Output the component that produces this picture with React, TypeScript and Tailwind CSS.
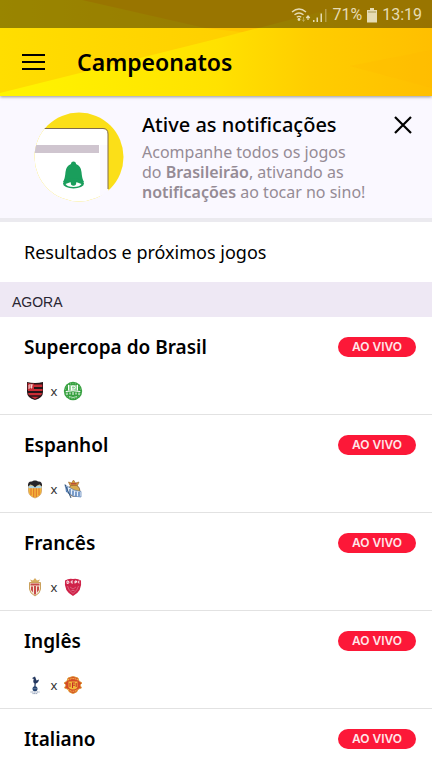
import React from 'react';

type Team = { name: string; Crest: () => React.ReactElement };
type League = { name: string; home?: Team; away?: Team };

function Flamengo() {
  return (
    <svg viewBox="0 0 20 20" className="h-5 w-5" aria-hidden="true">
      <path d="M2 1Q10 3 18 1V11Q18 17 10 19Q2 17 2 11Z" fill="#241518" />
      <path d="M9 3.500h8.300v2.600H9zM9 8h8.500v2H3V8zM3 12h14l-.8 2.200H3.800zM6 15.800h8l-4 2.200z" fill="#c92d35" />
      <path d="M2.700 2Q6 3 9 2.500V9H2.700Z" fill="#c92d35" />
      <path d="M4 4v4M4 4h2.500M4 6h3.500M6.500 3.500v4M6.500 4h1.500" stroke="#f4dada" strokeWidth="0.900" fill="none" />
    </svg>
  );
}

function Palmeiras() {
  return (
    <svg viewBox="0 0 20 20" className="h-5 w-5" aria-hidden="true">
      <circle cx="10" cy="10" r="9.200" fill="#36a03f" />
      <circle cx="10" cy="10" r="7.600" fill="none" stroke="#a9dcae" strokeWidth="0.700" strokeDasharray="1 1.500" />
      <path d="M5.500 4h9V9.500H5.500z" fill="#8fcf95" />
      <path d="M8.500 9.500V5h2q2 0 2 1.500t-2 1.500h-2M5.500 4v5.500M14.500 4v5.500" fill="none" stroke="#fff" strokeWidth="1" />
      <path d="M3 10.500q7-1.500 14 0M4 14v-2.500M7 13.500v-2M10 14v-3M13 13.500v-2M16 14v-2.500" stroke="#fff" strokeWidth="1" fill="none" />
      <path d="M6 15.500q4 2 8 0" stroke="#c4e8c7" strokeWidth="0.900" fill="none" />
    </svg>
  );
}

function Valencia() {
  return (
    <svg viewBox="0 0 20 20" className="h-5 w-5" aria-hidden="true">
      <path d="M3.500 6h13V12q0 5-6.500 7q-6.500-2-6.500-7z" fill="#f5b83b" stroke="#c28a4d" strokeWidth="0.600" />
      <path d="M6 9v7M8.700 9v9M11.300 9v9M14 9v7" stroke="#e0722d" strokeWidth="1.100" />
      <path d="M3.500 6.500h13v2.700h-13z" fill="#aed3e2" />
      <path d="M3 7.500Q2.500 2 7 2.500Q8.500 1 10 1.500Q11.500 1 13 2.500Q17.500 2 17 7.500L14.500 5.500L12 6.500L10 8.500L8 6.500L5.500 5.500Z" fill="#252329" />
    </svg>
  );
}

function RealSociedad() {
  return (
    <svg viewBox="0 0 20 20" className="h-5 w-5" aria-hidden="true">
      <circle cx="11" cy="11.500" r="5.800" fill="#d8ac4e" stroke="#795530" strokeWidth="0.800" />
      <path d="M7 6.500L5.500 3L8.500 4L10.500 1L12.500 4L16 3L14.500 6.500Z" fill="#d49b35" stroke="#9c632d" strokeWidth="0.600" />
      <path d="M8 4.800h5.500" stroke="#b43e36" strokeWidth="1.200" />
      <path d="M2 6L11 11L18 12.500V18L10 17L3.500 13Z" fill="#e8f0fb" stroke="#3867a6" strokeWidth="0.600" />
      <path d="M4 8v5M7 10v5M10 11.500v5M13 12.500v5M16 13v4.500" stroke="#3f70b0" strokeWidth="1.300" />
      <path d="M2 5.500L8 19" stroke="#345579" strokeWidth="1" />
    </svg>
  );
}

function Monaco() {
  return (
    <svg viewBox="0 0 20 20" className="h-5 w-5" aria-hidden="true">
      <path d="M6.500 5L5 2.500L8 3.500L10 1L12 3.500L15 2.500L13.500 5Z" fill="#d6a95e" />
      <path d="M4.500 5.500h11V12q0 4-5.500 7q-5.500-3-5.500-7z" fill="#f5e8d7" stroke="#caa15c" strokeWidth="1" />
      <path d="M5.500 6.500h9v2h-9zM6 9.500h2v6L6 13zM9 9h2v8.500H9zM12 9.500h2V13l-2 2.500z" fill="#c74949" />
    </svg>
  );
}

function Dijon() {
  return (
    <svg viewBox="0 0 20 20" className="h-5 w-5" aria-hidden="true">
      <path d="M2 3.500Q6 1 10 2Q14 1 18 3.500Q19.500 14 10 19Q0.500 14 2 3.500Z" fill="#cf2349" />
      <path d="M4 4v2.500q2.500 0 2-1.500T4 4M10 4q-2-.5-2 1t2 1M12 6.500V4h1.500v1.300H12M16.500 4q-1.500 0-1.500 1t1.500 1" fill="none" stroke="#fff" strokeWidth="0.900" />
      <path d="M4.500 9Q5 13 10 16.500Q15 13 15.500 9" fill="none" stroke="#dc6681" strokeWidth="0.900" />
      <path d="M7 10l3 2l3-2M8.500 13.500h3" fill="none" stroke="#dc6681" strokeWidth="0.900" />
    </svg>
  );
}

function Tottenham() {
  return (
    <svg viewBox="0 0 20 20" className="h-5 w-5" aria-hidden="true">
      <path d="M8 2.500L10 1.500L11 4L11.500 5.500L14 4.500Q13.500 8 10.800 8.500L10.500 12H9.300L9.500 8.500Q7.500 7.500 8.800 4L7 3.200Z" fill="#24385f" />
      <circle cx="10" cy="13.800" r="2.500" fill="#24436f" />
      <path d="M8.300 13.300q1.700 1 3.500 0" fill="none" stroke="#9babc2" strokeWidth="0.500" />
      <path d="M5.500 17h9M7.500 18.600h5" stroke="#7f8fab" strokeWidth="0.900" strokeDasharray="1.200 0.400" />
    </svg>
  );
}

function Manchester() {
  return (
    <svg viewBox="0 0 20 20" className="h-5 w-5" aria-hidden="true">
      <path d="M5 3Q10 0 15 3L16 6L19 8L17 10L18.500 13L15.500 14Q14 18 10 18.500Q6 18 4.500 14L1.500 13L3 10L1 8L4 6Z" fill="#d54a28" stroke="#dd992d" strokeWidth="0.800" />
      <path d="M5 5Q10 2 15 5M5 14.500Q10 18 15 14.500" fill="none" stroke="#f4bc48" strokeWidth="1.200" strokeDasharray="1.200 0.600" />
      <path d="M5.500 6.500h9v5q0 2.500-4.500 3q-4.500-.5-4.500-3z" fill="#f2b93a" />
      <path d="M7 8v4M9.500 7.500v5.500M9.500 8h2.500M9.500 10.200h2.500M13.200 8v4" stroke="#c52e25" strokeWidth="1" />
    </svg>
  );
}

const leagues: League[] = [
  { name: 'Supercopa do Brasil', home: { name: 'Flamengo', Crest: Flamengo }, away: { name: 'Palmeiras', Crest: Palmeiras } },
  { name: 'Espanhol', home: { name: 'Valencia', Crest: Valencia }, away: { name: 'Real Sociedad', Crest: RealSociedad } },
  { name: 'Francês', home: { name: 'Monaco', Crest: Monaco }, away: { name: 'Dijon', Crest: Dijon } },
  { name: 'Inglês', home: { name: 'Tottenham', Crest: Tottenham }, away: { name: 'Manchester United', Crest: Manchester } },
  { name: 'Italiano' },
];

function HeaderBackdrop() {
  return (
    <svg className="absolute inset-0 h-full w-full" viewBox="0 0 432 96" preserveAspectRatio="none" aria-hidden="true">
      <defs>
        <linearGradient id="base" x1="0" x2="1" y1="0" y2="0">
          <stop offset="0" stopColor="#ffde00" />
          <stop offset="0.500" stopColor="#ffd000" />
          <stop offset="1" stopColor="#ffc400" />
        </linearGradient>
        <linearGradient id="beam" x1="0" x2="1" y1="0" y2="0">
          <stop offset="0" stopColor="#fff500" />
          <stop offset="0.500" stopColor="#ffe200" />
          <stop offset="0.720" stopColor="#ffcd00" />
          <stop offset="1" stopColor="#ffbf00" />
        </linearGradient>
      </defs>
      <rect width="432" height="96" fill="url(#base)" />
      <path d="M82 0H432V14L250 33L205 28Z" fill="#ffc400" />
      <path d="M0 93L216 39L320 12L432 20V96H0Z" fill="url(#beam)" />
      <path d="M432 50L350 66L432 88Z" fill="#ffb700" opacity="0.250" />
    </svg>
  );
}

function StatusBar() {
  return (
    <div className="relative flex h-7 items-center justify-end gap-1 bg-black/40 pr-2.5 pt-0.5 font-[Roboto,sans-serif] text-base text-[#e6dcb4]">
      <svg viewBox="0 0 37 16" className="h-4 w-[37px]" role="img" aria-label="Wi-Fi e sinal">
        <path d="M1 5Q8-1 15 5M3.500 7.800Q8 4 12.500 7.800M5.800 10.300Q8 8.500 10.200 10.300" fill="none" stroke="currentColor" strokeWidth="1.400" />
        <circle cx="8" cy="12.500" r="1.400" fill="currentColor" />
        <path d="M12.500 10v4M11 12.500l1.500 2l1.500-2" fill="none" stroke="currentColor" opacity="0.400" />
        <path d="M17 13V9.500M15.200 11L17 9L18.800 11" fill="none" stroke="currentColor" strokeWidth="1.200" />
        <path d="M22 13h1.500V15H22zM25.500 10.500H27V15h-1.500zM29.500 6.500H31V15h-1.500z" fill="currentColor" />
        <path d="M34 2h1.500v13H34z" fill="currentColor" opacity="0.400" />
      </svg>
      <span className="leading-5">71%</span>
      <svg viewBox="0 0 12 16" className="h-4 w-3" role="img" aria-label="Bateria">
        <path d="M4 1h4v2h3V15.500H1V3H4z" fill="currentColor" />
        <path d="M2 5h8" stroke="#a69a58" />
      </svg>
      <span className="leading-5">13:19</span>
    </div>
  );
}

function NotificationArt() {
  return (
    <svg viewBox="0 0 90 90" className="h-[90px] w-[90px] shrink-0" aria-hidden="true">
      <defs>
        <clipPath id="disc"><circle cx="45" cy="45" r="44.500" /></clipPath>
      </defs>
      <g clipPath="url(#disc)">
        <rect width="90" height="90" fill="#fbdf18" />
        <path d="M0 17H69Q74 17 74 22V90H0Z" fill="#fff" />
        <path d="M66 33H74V90H66Z" fill="#fbf9ff" />
        <path d="M0 16.500H69Q74 16.500 74 22V77" fill="none" stroke="#806b4c" />
        <path d="M0 33H65V41H0Z" fill="#cfc5cf" />
      </g>
      <path d="M74.500 77V90H60Z" fill="#faf8ff" />
      <path d="M39.500 49.500a2.500 2.500 0 0 1 2.500 2.500Q47 54 47.500 60Q48 67 50 70H29Q31 67 31.500 60Q32 54 37 52a2.500 2.500 0 0 1 2.500-2.500Z" fill="#1a9e5c" />
      <ellipse cx="39.500" cy="71.500" rx="10.500" ry="5" fill="#1a9e5c" />
      <path d="M31.500 72Q39.500 68 47.500 72Q46 75 39.500 75T31.500 72Z" fill="#fff" />
      <circle cx="39.500" cy="71" r="2.700" fill="#1a9e5c" />
    </svg>
  );
}

function LeagueRow({ league }: { league: League }) {
  const { name, home, away } = league;
  return (
    <li className="h-[98px] shrink-0 border-b border-[#e2e2e2] pl-6 pr-4 pt-4">
      <div className="flex items-center justify-between">
        <h2 className="text-[19px] font-semibold leading-7">{name}</h2>
        <span className="flex h-5 w-[78px] items-center justify-center rounded-full bg-[#fc1838] font-[Inter,sans-serif] text-xs font-semibold leading-4 text-[#ffe6e9]">
          AO VIVO
        </span>
      </div>
      {home && away && (
        <div className="mt-5 flex items-center pl-px">
          <span role="img" aria-label={home.name}><home.Crest /></span>
          <span className="w-[18px] text-center text-[13px] leading-5 text-[#333]">x</span>
          <span role="img" aria-label={away.name}><away.Crest /></span>
        </div>
      )}
    </li>
  );
}

export default function App() {
  return (
    <div className="flex h-screen flex-col overflow-hidden bg-white font-['Noto_Sans',sans-serif] text-black">
      <header className="relative z-10 shrink-0 shadow-[0_1px_3px_rgba(0,0,0,0.4)]">
        <HeaderBackdrop />
        <StatusBar />
        <div className="relative flex h-[68px] items-center gap-8 pl-[22px]">
          <button type="button" aria-label="Abrir menu">
            <svg viewBox="0 0 23 16" className="h-4 w-[23px]" aria-hidden="true">
              <path d="M0 1H23M0 8H23M0 15H23" stroke="currentColor" strokeWidth="2" />
            </svg>
          </button>
          <h1 className="text-[23px] font-semibold leading-8">Campeonatos</h1>
        </div>
      </header>

      <main className="flex-1 overflow-y-auto [scrollbar-width:none]">
        <section className="flex items-start border-b-4 border-[#ebeaef] bg-[#faf8ff] pb-4 pl-[34px] pr-5 pt-4">
          <NotificationArt />
          <div className="ml-[18px] flex-1">
            <h2 className="text-xl font-medium leading-[26px]">Ative as notificações</h2>
            <p className="mt-1 text-base leading-5 text-[#958b95]">
              Acompanhe todos os jogos
              <br />
              do <b className="font-semibold">Brasileirão</b>, ativando as
              <br />
              <b className="font-semibold">notificações</b> ao tocar no sino!
            </p>
          </div>
          <button type="button" aria-label="Fechar" className="mt-1">
            <svg viewBox="0 0 18 18" className="h-[18px] w-[18px]" aria-hidden="true">
              <path d="M1 1L17 17M17 1L1 17" stroke="currentColor" strokeWidth="2.200" />
            </svg>
          </button>
        </section>

        <a href="#resultados" className="flex h-[60px] items-center pl-6 text-lg leading-6">
          Resultados e próximos jogos
        </a>
        <h2 className="flex h-[35px] items-center bg-[#eee8f4] pl-3 pt-1 font-['Liberation_Sans',sans-serif] text-sm leading-5 text-[#292532]">
          AGORA
        </h2>
        <ul>
          {leagues.map((league) => (
            <LeagueRow key={league.name} league={league} />
          ))}
        </ul>
      </main>
    </div>
  );
}
